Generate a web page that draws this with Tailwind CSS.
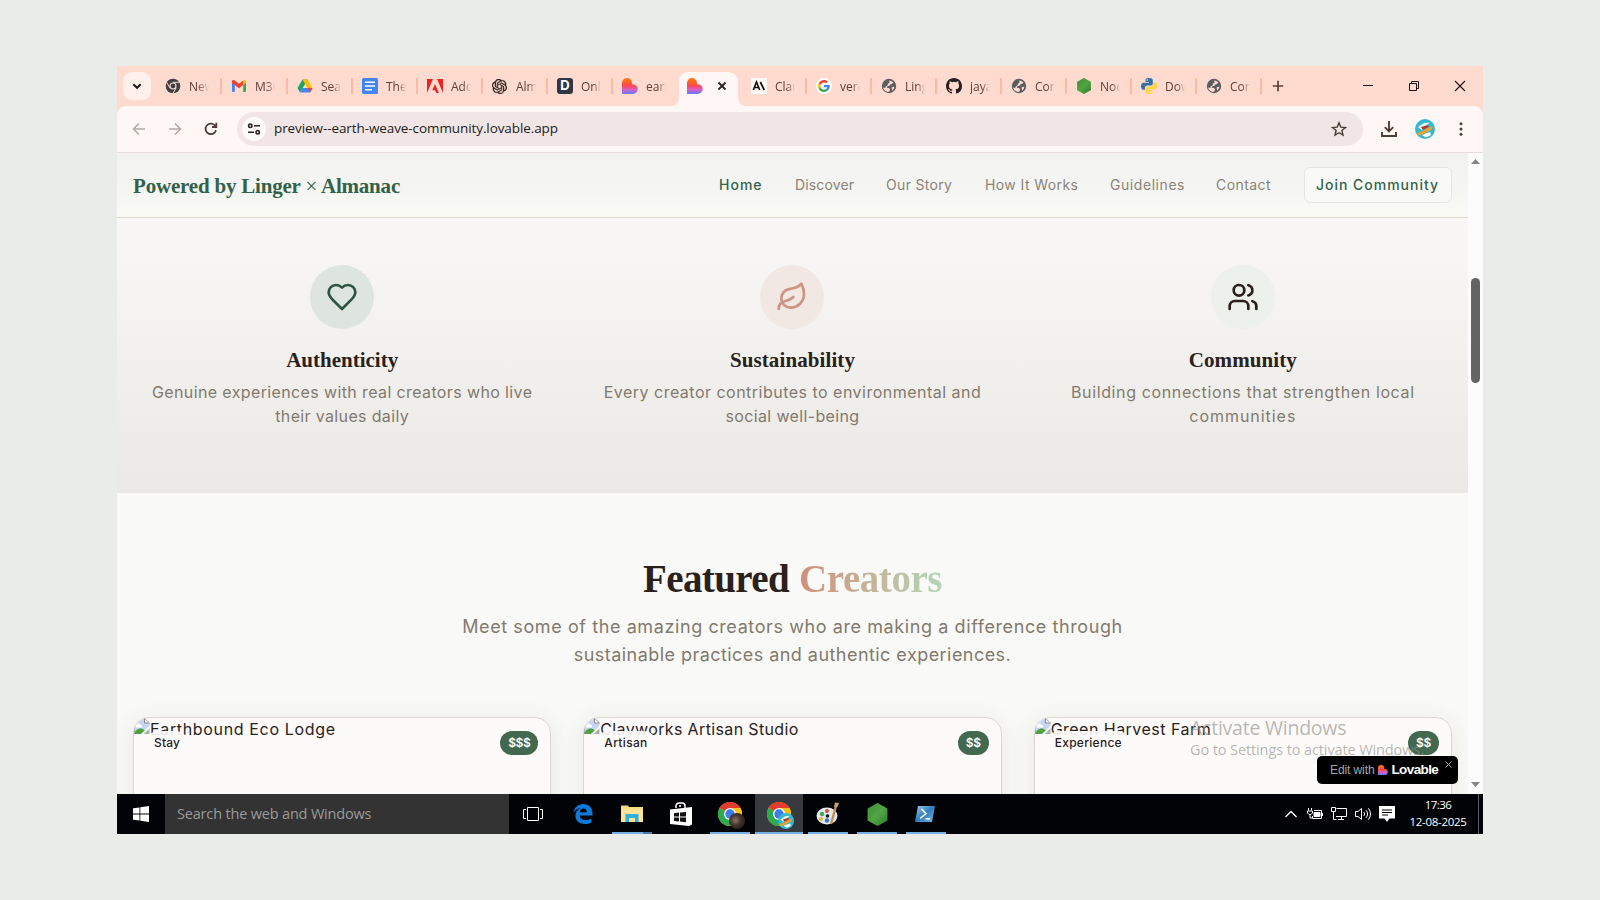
<!DOCTYPE html>
<html lang="en">
<head>
<meta charset="utf-8">
<title>Linger × Almanac</title>
<script src="https://cdn.jsdelivr.net/npm/@tailwindcss/browser@4"></script>
</head>
<body class="flex h-screen w-screen overflow-hidden bg-[#eaece9] pt-[66px] pl-[117px] font-['Inter',sans-serif]">

<svg class="absolute size-0">
  <defs>
    <linearGradient id="lv" x1="0" y1="0" x2="0" y2="1"><stop offset="0" stop-color="#ff7a1a"/><stop offset=".25" stop-color="#fd6420"/><stop offset=".5" stop-color="#fb4560"/><stop offset=".72" stop-color="#d85fc0"/><stop offset="1" stop-color="#5f7cff"/></linearGradient>
    <linearGradient id="nd" x1="0" y1="0" x2="1" y2="1"><stop offset="0" stop-color="#3c8f35"/><stop offset=".5" stop-color="#52a544"/><stop offset="1" stop-color="#2f7a2b"/></linearGradient>
    <linearGradient id="ps" x1="0" y1="0" x2="1" y2="1"><stop offset="0" stop-color="#9fd0ee"/><stop offset=".5" stop-color="#2f7dbb"/><stop offset="1" stop-color="#7fbbe2"/></linearGradient>
    <symbol id="lovable" viewBox="0 0 16 16"><path d="M0 5a5 5 0 0 1 10 0v1.2h.8a4.9 4.9 0 0 1 0 9.8H0z" fill="url(#lv)"/></symbol>
    <symbol id="globe" viewBox="0 0 16 16"><circle cx="8" cy="8" r="7.2" fill="#5a5d61"/><path d="M8.2 2.4c1.600.2 3.300.8 4.300 2.200l-1.600 1.300-1.900.5-.4 1.400-2 .3-.9 1.600 2.200.3 1.300 1.500-.9 1.900-1.500.6c-2.500-.4-4.300-2.100-4.800-4.400l2.200.3.5-1.500 2-1.200.2-1.700 1.600-.4z" fill="#ffdace"/><path d="M10.500 9.600l2.800-1c-.1 1.600-.8 3-2.100 3.900z" fill="#ffdace"/></symbol>
    <symbol id="chrome" viewBox="0 0 24 24"><circle cx="12" cy="12" r="12" fill="#fbc116"/><path d="M12 12L1.600 6A12 12 0 0 1 22.400 6z" fill="#e33b2e"/><path d="M1.600 6A12 12 0 0 0 12 24l5.200-9L12 12z" fill="#2da94f"/><path d="M22.400 6H12v6l5.200 3L12 24A12 12 0 0 0 22.400 6z" fill="#fbc116"/><circle cx="12" cy="12" r="6" fill="#fff"/><circle cx="12" cy="12" r="4.700" fill="#3b7cea"/></symbol>
    <symbol id="broken" viewBox="0 0 16 16"><path d="M0 0h10.500L15.500 5v5.500L9.500 16H0z" fill="#c6d5f3"/><path d="M10.500 0v5h5" fill="#fff" stroke="#8b8b8b"/><path d="M2 7.500a2.500 2.500 0 0 1 4.500-.8A2 2 0 0 1 8 9.500H2z" fill="#fff"/><path d="M0 16c1.500-4.500 5-6 8-5.500l3.500 2.300L8.500 16z" fill="#4fa23e"/><path d="M15.500 10.500V16H9.800z" fill="#a4b4a4"/><path d="M16 8.500L7.500 16.500" stroke="#fff" stroke-width="1.600"/><path d="M.5 0V16M0 .5h10.500L15.500 5" fill="none" stroke="#9a9a9a" stroke-width=".8"/></symbol>
    <symbol id="node" viewBox="0 0 20 22"><path d="M10 0l9.500 5.200v11.600L10 22 .5 16.800V5.200z" fill="url(#nd)"/></symbol>
    <symbol id="surfer" viewBox="0 0 20 20"><circle cx="10" cy="10" r="10" fill="#34b9d3"/><path d="M3 8l6-4 6-.5-3 2.500 2 2-7 3z" fill="#f5f1ea"/><path d="M6 8l7-2 1 2-6 3z" fill="#a33a35"/><path d="M2 14.500l14-7c2 0 2 2 0 3.500L6 16c-2 .8-4 0-4-1.500z" fill="#f0a02c"/><path d="M7 16l8-3 1 3-5 2.500z" fill="#fff"/></symbol>
  </defs>
</svg>

<div class="relative flex h-[768px] w-[1366px] flex-col overflow-hidden bg-[#ffdace]">

  <!-- Tab strip -->
  <div class="flex h-10 shrink-0 items-center pl-1.5 font-['Open_Sans',sans-serif] text-[12px] text-[#5d4039]">
    <div class="mr-[10px] flex size-7 items-center justify-center rounded-[9px] bg-[#fff0eb]"><svg class="size-3" viewBox="0 0 12 12" fill="none" stroke="#1f1a19" stroke-width="2"><path d="M2.300 4.300L6 7.800l3.700-3.500"/></svg></div>
    <div class="flex w-[66px] items-center pl-[4px]">
      <svg class="size-4 shrink-0" viewBox="0 0 16 16"><circle cx="8" cy="8" r="7.300" fill="#3f4045"/><circle cx="8" cy="8" r="3.500" fill="#ffdace"/><circle cx="8" cy="8" r="2.400" fill="#3f4045"/><path d="M8 4.300h6.600M4.800 9.800L1.500 4.200M11.200 9.800L7.900 15.400" stroke="#ffdace"/></svg>
      <span class="mt-0.5 ml-2 w-[20px] overflow-hidden whitespace-nowrap mask-r-from-40%">New</span><i class="ml-auto mr-[5px] h-4 w-0.5 bg-[#ffb9a2]"></i>
    </div>
    <div class="flex w-[66px] items-center pl-[4px]">
      <svg class="size-4 shrink-0" viewBox="0 0 16 16"><path d="M1 3.500h2.800V14H2a1 1 0 0 1-1-1z" fill="#4285f4"/><path d="M12.200 3.500H15V13a1 1 0 0 1-1 1h-1.800z" fill="#34a853"/><path d="M1 3.300C1 2 2.600 1.500 3.800 2.500L8 5.700l4.200-3.200V7L8 10.200 1 5z" fill="#ea4335"/><path d="M12.200 2.500C13.400 1.500 15 2 15 3.300V5l-2.800 2z" fill="#fbbc04"/></svg>
      <span class="mt-0.5 ml-2 w-[20px] overflow-hidden whitespace-nowrap mask-r-from-60%">M365</span><i class="ml-auto mr-[5px] h-4 w-0.5 bg-[#ffb9a2]"></i>
    </div>
    <div class="flex w-[65px] items-center pl-[4px]">
      <svg class="size-4 shrink-0" viewBox="0 0 16 16"><path d="M5.500 1.500h5L8 6 3 14.500.5 10z" fill="#1ea362"/><path d="M5.500 1.500h5l5 8.500h-5z" fill="#fbbc04"/><path d="M5.600 10h9.900L13 14.500H3z" fill="#4285f4"/><path d="M15.500 10L13 14.500 10.600 10z" fill="#ea4335"/></svg>
      <span class="mt-0.5 ml-2 w-[20px] overflow-hidden whitespace-nowrap mask-r-from-60%">Sea</span><i class="ml-auto mr-[5px] h-4 w-0.5 bg-[#ffb9a2]"></i>
    </div>
    <div class="flex w-[65px] items-center pl-[4px]">
      <svg class="size-4 shrink-0" viewBox="0 0 16 16"><rect width="16" height="16" rx="1.500" fill="#4285f4"/><path d="M3 4.300h10M3 8h10M3 11.700h7" stroke="#fff" stroke-width="1.600"/></svg>
      <span class="mt-0.5 ml-2 w-[20px] overflow-hidden whitespace-nowrap mask-r-from-60%">The</span><i class="ml-auto mr-[5px] h-4 w-0.5 bg-[#ffb9a2]"></i>
    </div>
    <div class="flex w-[65px] items-center pl-[4px]">
      <svg class="size-4 shrink-0" viewBox="0 0 16 16"><path d="M0 1h6L0 15zM10 1h6v14zM8 6l3.900 9H9.300l-1.200-2.800H5.300z" fill="#ed2224"/></svg>
      <span class="mt-0.5 ml-2 w-[20px] overflow-hidden whitespace-nowrap mask-r-from-60%">Ado</span><i class="ml-auto mr-[5px] h-4 w-0.5 bg-[#ffb9a2]"></i>
    </div>
    <div class="flex w-[65px] items-center pl-[4px]">
      <svg class="size-[15px] shrink-0" viewBox="0 0 24 24" fill="#2b2422" stroke="#2b2422" stroke-width=".5"><path d="M22.280 9.820a5.980 5.980 0 0 0-.52-4.910 6.050 6.050 0 0 0-6.510-2.900A6.070 6.070 0 0 0 4.980 4.180a5.980 5.980 0 0 0-4 2.900 6.050 6.050 0 0 0 .74 7.100 5.980 5.980 0 0 0 .51 4.910 6.050 6.050 0 0 0 6.510 2.900A5.980 5.980 0 0 0 13.260 24a6.060 6.060 0 0 0 5.770-4.210 5.990 5.990 0 0 0 4-2.900 6.060 6.060 0 0 0-.75-7.070zm-9.020 12.610a4.480 4.480 0 0 1-2.880-1.040l.14-.08 4.780-2.760a.8.8 0 0 0 .39-.68v-6.740l2.020 1.170a.07.07 0 0 1 .04.050v5.580a4.500 4.500 0 0 1-4.490 4.500zM3.600 18.300a4.470 4.470 0 0 1-.54-3.010l.14.080 4.780 2.760a.77.77 0 0 0 .78 0l5.840-3.370v2.330a.08.08 0 0 1-.03.060L9.740 19.950a4.500 4.500 0 0 1-6.140-1.650zM2.340 7.900a4.480 4.480 0 0 1 2.370-1.980v5.680a.77.77 0 0 0 .38.680l5.820 3.350-2.020 1.170a.08.08 0 0 1-.07 0l-4.830-2.790A4.500 4.500 0 0 1 2.340 7.870zm16.600 3.860L13.100 8.360l2.020-1.160a.08.08 0 0 1 .07 0l4.830 2.790a4.490 4.490 0 0 1-.68 8.100v-5.680a.79.79 0 0 0-.4-.650zm2.010-3.020l-.14-.09-4.780-2.780a.78.78 0 0 0-.78 0L9.410 9.230V6.900a.07.07 0 0 1 .03-.06l4.830-2.790a4.500 4.500 0 0 1 6.680 4.660zM8.310 12.860l-2.020-1.160a.08.08 0 0 1-.04-.06V6.070a4.500 4.500 0 0 1 7.370-3.450l-.14.080L8.700 5.460a.8.8 0 0 0-.39.680zm1.100-2.370l2.600-1.500 2.610 1.500v3l-2.600 1.500-2.610-1.500z"/></svg>
      <span class="mt-0.5 ml-[9px] w-[20px] overflow-hidden whitespace-nowrap mask-r-from-60%">Alm</span><i class="ml-auto mr-[5px] h-4 w-0.5 bg-[#ffb9a2]"></i>
    </div>
    <div class="flex w-[65px] items-center pl-[4px]">
      <div class="flex size-4 shrink-0 items-center justify-center rounded-[3px] bg-[#2f3744] font-['Inter'] text-[13px] font-bold text-white">D</div>
      <span class="mt-0.5 ml-2 w-[20px] overflow-hidden whitespace-nowrap mask-r-from-60%">Onl</span><i class="ml-auto mr-[5px] h-4 w-0.5 bg-[#ffb9a2]"></i>
    </div>
    <div class="flex w-[65px] items-center pl-[4px]">
      <svg class="size-4 shrink-0"><use href="#lovable"/></svg>
      <span class="mt-0.5 ml-2 w-[20px] overflow-hidden whitespace-nowrap mask-r-from-60%">earth</span>
    </div>
    <div class="relative -ml-1 flex h-[34px] w-[59px] items-center justify-between self-end rounded-t-[9px] bg-[#fff7f5] pr-2 pb-1.5 pl-2">
      <svg class="absolute bottom-0 -left-2 size-2" viewBox="0 0 8 8"><path d="M8 0v8H0a8 8 0 0 0 8-8z" fill="#fff7f5"/></svg>
      <svg class="absolute -right-2 bottom-0 size-2" viewBox="0 0 8 8"><path d="M0 0v8h8a8 8 0 0 1-8-8z" fill="#fff7f5"/></svg>
      <svg class="size-4"><use href="#lovable"/></svg>
      <svg class="size-4" viewBox="0 0 16 16" stroke="#2a2220" stroke-width="1.800"><path d="M4.500 4.500l7 7M11.500 4.500l-7 7"/></svg>
    </div>
    <div class="ml-[9px] flex w-[65px] items-center pl-[4px]">
      <div class="flex size-4 shrink-0 items-center justify-center bg-[#fffaf8]"><svg class="size-4" viewBox="0 0 16 16" fill="none" stroke="#111" stroke-width="1.700"><path d="M2.300 12L5.500 4l3.200 8M3.500 9.500h4M9.300 4l4 8"/></svg></div>
      <span class="mt-0.5 ml-2 w-[20px] overflow-hidden whitespace-nowrap mask-r-from-60%">Clau</span><i class="ml-auto mr-[5px] h-4 w-0.5 bg-[#ffb9a2]"></i>
    </div>
    <div class="flex w-[65px] items-center pl-[4px]">
      <div class="size-4 shrink-0 rounded-full bg-white p-[2px]"><svg class="size-3" viewBox="0 0 48 48"><path fill="#EA4335" d="M24 9.500c3.540 0 6.710 1.220 9.210 3.600l6.850-6.850C35.900 2.380 30.470 0 24 0 14.620 0 6.510 5.380 2.560 13.220l7.980 6.190C12.430 13.720 17.740 9.500 24 9.500z"/><path fill="#4285F4" d="M46.980 24.550c0-1.570-.15-3.090-.38-4.550H24v9.020h12.940c-.58 2.960-2.260 5.480-4.780 7.180l7.730 6c4.510-4.180 7.090-10.360 7.090-17.650z"/><path fill="#FBBC05" d="M10.530 28.590a14.500 14.500 0 0 1 0-9.180l-7.980-6.190a24 24 0 0 0 0 21.560z"/><path fill="#34A853" d="M24 48c6.480 0 11.930-2.130 15.890-5.810l-7.730-6c-2.150 1.450-4.920 2.300-8.160 2.300-6.260 0-11.570-4.220-13.470-9.910l-7.980 6.190C6.510 42.620 14.620 48 24 48z"/></svg></div>
      <span class="mt-0.5 ml-2 w-[20px] overflow-hidden whitespace-nowrap mask-r-from-60%">vero</span><i class="ml-auto mr-[5px] h-4 w-0.5 bg-[#ffb9a2]"></i>
    </div>
    <div class="flex w-[65px] items-center pl-[4px]">
      <svg class="size-4 shrink-0"><use href="#globe"/></svg>
      <span class="mt-0.5 ml-2 w-[20px] overflow-hidden whitespace-nowrap mask-r-from-60%">Ling</span><i class="ml-auto mr-[5px] h-4 w-0.5 bg-[#ffb9a2]"></i>
    </div>
    <div class="flex w-[65px] items-center pl-[4px]">
      <svg class="size-4 shrink-0" viewBox="0 0 16 16" fill="#24201f"><path d="M8 0C3.580 0 0 3.580 0 8c0 3.540 2.290 6.530 5.470 7.590.4.070.55-.17.55-.38 0-.19-.01-.82-.01-1.490-2.010.37-2.530-.49-2.690-.94-.09-.23-.48-.94-.82-1.130-.28-.15-.68-.52-.01-.53.63-.01 1.080.58 1.230.82.720 1.210 1.870.87 2.330.66.070-.52.280-.87.510-1.070-1.780-.2-3.640-.89-3.640-3.950 0-.87.310-1.590.82-2.150-.08-.2-.36-1.020.080-2.120 0 0 .67-.21 2.200.82a7.400 7.400 0 0 1 4 0c1.530-1.040 2.200-.82 2.200-.82.440 1.100.16 1.920.080 2.120.51.560.82 1.270.82 2.150 0 3.070-1.870 3.750-3.650 3.950.29.250.54.730.54 1.480 0 1.070-.01 1.930-.01 2.200 0 .21.150.46.550.38A8.010 8.010 0 0 0 16 8c0-4.420-3.580-8-8-8z"/></svg>
      <span class="mt-0.5 ml-2 w-[20px] overflow-hidden whitespace-nowrap mask-r-from-60%">jaya</span><i class="ml-auto mr-[5px] h-4 w-0.5 bg-[#ffb9a2]"></i>
    </div>
    <div class="flex w-[65px] items-center pl-[4px]">
      <svg class="size-4 shrink-0"><use href="#globe"/></svg>
      <span class="mt-0.5 ml-2 w-[20px] overflow-hidden whitespace-nowrap mask-r-from-60%">Con</span><i class="ml-auto mr-[5px] h-4 w-0.5 bg-[#ffb9a2]"></i>
    </div>
    <div class="flex w-[65px] items-center pl-[4px]">
      <svg class="size-4 shrink-0"><use href="#node"/></svg>
      <span class="mt-0.5 ml-2 w-[20px] overflow-hidden whitespace-nowrap mask-r-from-60%">Nod</span><i class="ml-auto mr-[5px] h-4 w-0.5 bg-[#ffb9a2]"></i>
    </div>
    <div class="flex w-[65px] items-center pl-[4px]">
      <svg class="size-4 shrink-0" viewBox="0 0 16 16"><path d="M7.900 0C4.800 0 4.500 1.300 4.500 2.200V4H8v.7H2.500C1 4.700 0 6 0 8.200s1 3.500 2.300 3.500h1.600V9.900c0-1.300 1-2.400 2.300-2.400h3.600c1.100 0 2-.9 2-2V2.200C11.800.8 10.400 0 7.900 0z" fill="#3571a3"/><path d="M8.100 16c3.100 0 3.400-1.300 3.400-2.200V12H8v-.7h5.500c1.500 0 2.500-1.300 2.500-3.500s-1-3.500-2.300-3.500h-1.300v1.800c0 1.300-1 2.400-2.300 2.400H6.500c-1.100 0-2 .9-2 2v3.300C4.500 15.200 5.600 16 8.100 16z" fill="#ffd343"/><circle cx="6.200" cy="2" r=".7" fill="#fff"/><circle cx="9.800" cy="14" r=".7" fill="#fff"/></svg>
      <span class="mt-0.5 ml-2 w-[20px] overflow-hidden whitespace-nowrap mask-r-from-60%">Dow</span><i class="ml-auto mr-[5px] h-4 w-0.5 bg-[#ffb9a2]"></i>
    </div>
    <div class="flex w-[65px] items-center pl-[4px]">
      <svg class="size-4 shrink-0"><use href="#globe"/></svg>
      <span class="mt-0.5 ml-2 w-[20px] overflow-hidden whitespace-nowrap mask-r-from-60%">Con</span><i class="ml-auto mr-[5px] h-4 w-0.5 bg-[#ffb9a2]"></i>
    </div>
    <svg class="ml-[5px] size-3 shrink-0" viewBox="0 0 12 12" stroke="#5d4039" stroke-width="1.700"><path d="M6 .8v10.400M.8 6h10.400"/></svg>
    <div class="mr-[17px] ml-auto flex gap-[34px]">
      <svg class="size-3" viewBox="0 0 12 12" stroke="#1a1514"><path d="M1 5.500h10"/></svg>
      <svg class="size-3" viewBox="0 0 12 12" fill="none" stroke="#1a1514"><path d="M1.500 3.500h7v7h-7zM3.500 3.500v-2h7v7h-2"/></svg>
      <svg class="size-3" viewBox="0 0 12 12" stroke="#1a1514" stroke-width="1.100"><path d="M1 1l10 10M11 1L1 11"/></svg>
    </div>
  </div>

  <!-- Toolbar -->
  <div class="flex h-[47px] shrink-0 items-center rounded-t-[9px] border-b border-[#e6dedb] bg-[#fff7f5] pl-[14px]">
    <svg class="size-4" viewBox="0 0 16 16" fill="none" stroke="#b5a9a6" stroke-width="1.600"><path d="M14 8H2.500M8 2.500L2.500 8 8 13.500"/></svg>
    <svg class="ml-5 size-4" viewBox="0 0 16 16" fill="none" stroke="#b5a9a6" stroke-width="1.600"><path d="M2 8h11.500M8 2.500L13.500 8 8 13.500"/></svg>
    <svg class="ml-5 size-4" viewBox="0 0 16 16" fill="none" stroke="#4e3f3b" stroke-width="1.800"><path d="M13 9.200A5.300 5.300 0 1 1 11.700 4.200L13 5.500"/><path d="M13.300 1.800v4.200H9"/></svg>
    <div class="ml-[18px] flex h-[34px] w-[1126px] items-center rounded-full bg-[#f1e6e5] pr-4 pl-[5px]">
      <div class="flex size-6 items-center justify-center rounded-full bg-[#fffafa]"><svg class="size-[14px]" viewBox="0 0 14 14" fill="none" stroke="#2c2321" stroke-width="1.600"><circle cx="3.300" cy="3.800" r="1.700"/><path d="M7 3.800h6M1 10.200h6"/><circle cx="10.700" cy="10.200" r="1.700"/></svg></div>
      <span class="mb-px ml-2 font-['Open_Sans',sans-serif] text-[13.5px] tracking-[-0.091px] text-[#231d1c]">preview--earth-weave-community.lovable.app</span>
      <svg class="ml-auto size-4" viewBox="0 0 16 16" fill="none" stroke="#4b3c38" stroke-width="1.400"><path d="M8 1.800l1.800 4.300 4.700.4-3.600 3 1.100 4.600L8 11.700l-4 2.400 1.100-4.600-3.600-3 4.700-.4z"/></svg>
    </div>
    <svg class="ml-[18px] size-4" viewBox="0 0 16 16" fill="none" stroke="#4e3b36" stroke-width="1.900"><path d="M8 0v10M3.800 6.200L8 10.400l4.200-4.200M1 11v4h14v-4"/></svg>
    <svg class="ml-[18px] size-5"><use href="#surfer"/></svg>
    <svg class="ml-[18px] size-4" viewBox="0 0 16 16" fill="#4e3f3b"><circle cx="8" cy="2.800" r="1.500"/><circle cx="8" cy="8" r="1.500"/><circle cx="8" cy="13.200" r="1.500"/></svg>
  </div>

  <!-- Page and scrollbar -->
  <div class="flex h-[641px] shrink-0">
    <div class="flex h-full w-[1351px] flex-col overflow-hidden bg-[#f9f9f7]">
      <header class="flex h-[65px] shrink-0 items-center border-b border-[#dcd9cf] bg-linear-to-b from-[#f2f3f1] via-[#f5f6f3] via-60% to-[#fafaf5] px-4">
        <div class="pt-[3px] font-['Liberation_Serif',serif] text-[21px] font-bold tracking-[-0.2px] whitespace-nowrap text-[#33614a]">Powered by Linger <span class="font-normal">×</span> Almanac</div>
        <nav class="ml-auto flex items-center text-[14px] whitespace-nowrap text-[#8b8378]">
          <a class="mr-[31px] w-[44px] pb-0.5 font-medium tracking-[1px] text-[#33614a]">Home</a>
          <a class="mr-[31px] w-[61px] pb-0.5 pl-px tracking-[0.138px]">Discover</a>
          <a class="mr-[31px] w-[68px] pb-0.5 tracking-[0.328px]">Our Story</a>
          <a class="mr-[31px] w-[94px] pb-0.5 tracking-[0.412px]">How It Works</a>
          <a class="mr-[31px] w-[75px] pb-0.5 tracking-[0.561px]">Guidelines</a>
          <a class="mr-[31px] w-[57px] pb-0.5 tracking-[0.419px]">Contact</a>
          <a class="flex h-9 w-[148px] items-center rounded-md border border-[#e6e6e0] bg-[#f9faf8] pb-0.5 pl-[11px] font-medium tracking-[0.98px] text-[#33614a]">Join Community</a>
        </nav>
      </header>

      <section class="grid h-[275px] shrink-0 grid-cols-3 gap-8 bg-linear-to-b from-[#f9f8f6] to-[#ebe9e6] px-4 pt-[47px] text-center">
        <div class="flex flex-col items-center">
          <div class="mb-[17px] flex size-16 items-center justify-center rounded-full bg-[#dee4de]"><svg class="size-8" viewBox="0 0 24 24" fill="none" stroke="#2b5541" stroke-width="2" stroke-linecap="round" stroke-linejoin="round"><path d="M19 14c1.490-1.460 3-3.210 3-5.500A5.500 5.500 0 0 0 16.500 3c-1.760 0-3 .5-4.500 2-1.500-1.500-2.740-2-4.500-2A5.500 5.500 0 0 0 2 8.500c0 2.300 1.500 4.050 3 5.500l7 7Z"/></svg></div>
          <h3 class="mb-1.5 font-['Liberation_Serif',serif] text-[21px] leading-7 font-bold text-[#2a211d]">Authenticity</h3>
          <p class="text-base whitespace-nowrap text-[#827a6d]"><span class="block tracking-[0.376px]">Genuine experiences with real creators who live</span><span class="block tracking-[0.351px]">their values daily</span></p>
        </div>
        <div class="flex flex-col items-center">
          <div class="mb-[17px] flex size-16 items-center justify-center rounded-full bg-[#f1e8e4]"><svg class="size-8" viewBox="0 0 24 24" fill="none" stroke="#ce9382" stroke-width="2" stroke-linecap="round" stroke-linejoin="round"><path d="M11 20A7 7 0 0 1 9.800 6.100C15.500 5 17 4.480 19 2c1 2 2 4.180 2 8 0 5.500-4.780 10-10 10Z"/><path d="M2 21c0-3 1.850-5.360 5.080-6C9.500 14.520 12 13 13 12"/></svg></div>
          <h3 class="mb-1.5 font-['Liberation_Serif',serif] text-[21px] leading-7 font-bold tracking-[0.1px] text-[#2a211d]">Sustainability</h3>
          <p class="text-base whitespace-nowrap text-[#827a6d]"><span class="block tracking-[0.484px]">Every creator contributes to environmental and</span><span class="block tracking-[0.349px]">social well-being</span></p>
        </div>
        <div class="flex flex-col items-center">
          <div class="mb-[17px] flex size-16 items-center justify-center rounded-full bg-[#edf0eb]"><svg class="size-8" viewBox="0 0 24 24" fill="none" stroke="#2a211d" stroke-width="2" stroke-linecap="round" stroke-linejoin="round"><path d="M16 21v-2a4 4 0 0 0-4-4H6a4 4 0 0 0-4 4v2"/><circle cx="9" cy="7" r="4"/><path d="M22 21v-2a4 4 0 0 0-3-3.870M16 3.130a4 4 0 0 1 0 7.750"/></svg></div>
          <h3 class="mb-1.5 font-['Liberation_Serif',serif] text-[21px] leading-7 font-bold tracking-[0.1px] text-[#2a211d]">Community</h3>
          <p class="text-base whitespace-nowrap text-[#827a6d]"><span class="block tracking-[0.625px]">Building connections that strengthen local</span><span class="block tracking-[0.956px]">communities</span></p>
        </div>
      </section>

      <section class="shrink-0 pt-[66px] text-center">
        <h2 class="mb-[14px] flex justify-center font-['Liberation_Serif',serif] text-[39px] leading-10 font-bold text-[#2a211d]"><span class="mr-[10px] tracking-[-0.6px]">Featured</span><span class="bg-linear-to-r from-[#cf8f7c] to-[#b2d6b6] bg-clip-text tracking-[-0.45px] text-transparent">Creators</span></h2>
        <p class="mb-12 text-lg leading-7 whitespace-nowrap text-[#827a6d]"><span class="block tracking-[0.592px]">Meet some of the amazing creators who are making a difference through</span><span class="block tracking-[0.45px]">sustainable practices and authentic experiences.</span></p>
        <div class="grid grid-cols-3 gap-8 px-4 text-left text-[#2a211d]">
          <article class="relative h-[300px] overflow-hidden rounded-2xl border border-[#dcd8d0] bg-[#fcfbf9] shadow-[0_4px_24px_rgba(60,50,30,0.09)]">
            <div class="flex h-6 items-start whitespace-nowrap"><svg class="size-4 shrink-0"><use href="#broken"/></svg><span class="-mt-px tracking-[0.652px]">Earthbound Eco Lodge</span></div>
            <span class="absolute top-[13px] left-3 flex h-6 items-center rounded-full bg-[#fcfbf9]/90 px-2 text-xs font-medium tracking-[0.188px]">Stay</span>
            <span class="absolute top-[13px] right-3 flex h-6 w-[38px] items-center justify-center rounded-full bg-[#42694f] text-xs font-semibold tracking-[-0.4px] text-white">$$$</span>
          </article>
          <article class="relative h-[300px] overflow-hidden rounded-2xl border border-[#dcd8d0] bg-[#fcfbf9] shadow-[0_4px_24px_rgba(60,50,30,0.09)]">
            <div class="flex h-6 items-start whitespace-nowrap"><svg class="size-4 shrink-0"><use href="#broken"/></svg><span class="-mt-px tracking-[0.359px]">Clayworks Artisan Studio</span></div>
            <span class="absolute top-[13px] left-3 flex h-6 items-center rounded-full bg-[#fcfbf9]/90 px-2 text-xs font-medium tracking-[0.339px]">Artisan</span>
            <span class="absolute top-[13px] right-3 flex h-6 w-[31px] items-center justify-center rounded-full bg-[#42694f] text-xs font-semibold tracking-[-0.4px] text-white">$$</span>
          </article>
          <article class="relative h-[300px] overflow-hidden rounded-2xl border border-[#dcd8d0] bg-[#fcfbf9] shadow-[0_4px_24px_rgba(60,50,30,0.09)]">
            <div class="flex h-6 items-start whitespace-nowrap"><svg class="size-4 shrink-0"><use href="#broken"/></svg><span class="-mt-px tracking-[0.472px]">Green Harvest Farm</span></div>
            <span class="absolute top-[13px] left-3 flex h-6 items-center rounded-full bg-[#fcfbf9]/90 px-2 text-xs font-medium tracking-[0.283px]">Experience</span>
            <span class="absolute top-[13px] right-3 flex h-6 w-[31px] items-center justify-center rounded-full bg-[#42694f] text-xs font-semibold tracking-[-0.4px] text-white">$$</span>
          </article>
        </div>
      </section>
    </div>
    <div class="flex w-[15px] flex-col items-center bg-[#fcfcfc] pt-1.5">
      <svg class="h-[5px] w-[9px]" viewBox="0 0 9 5" fill="#858585"><path d="M0 5L4.500 0 9 5z"/></svg>
      <div class="mt-[114px] h-[105px] w-[9px] rounded-full bg-[#636363]"></div>
      <svg class="mt-auto mb-[7px] h-[5px] w-[9px]" viewBox="0 0 9 5" fill="#858585"><path d="M0 0L4.500 5 9 0z"/></svg>
    </div>
  </div>

  <!-- Taskbar -->
  <div class="flex h-10 shrink-0 bg-[#020306] font-['Open_Sans',sans-serif]">
    <div class="flex w-12 items-center justify-center"><svg class="size-4" viewBox="0 0 16 16" fill="#fff"><path d="M0 2.300L6.500 1.400v6.200H0zM7.300 1.300L16 0v7.600H7.300zM0 8.400h6.500v6.200L0 13.700zM7.300 8.400H16V16l-8.700-1.300z"/></svg></div>
    <div class="flex w-[344px] items-center bg-[#333333] pl-3 text-[14.5px] tracking-[-0.177px] whitespace-nowrap text-[#9a9a9a]">Search the web and Windows</div>
    <div class="flex w-12 items-center justify-center"><svg class="h-[14px] w-5" viewBox="0 0 20 14" fill="none" stroke="#fff"><path d="M4.500.5h11v13h-11zM3 2.500H.5v9H3M17 2.500h2.500v9H17"/></svg></div>
    <div class="flex w-[51px] items-center justify-center"><svg class="size-5" viewBox="0 0 20 21"><path d="M0 9.300C.8 3.800 4.800 0 10.400 0 16 0 20 4 20 9.800V12H6.600c.2 3 2.700 4.800 6.200 4.800 2.200 0 4.200-.6 6-1.600v4.400c-2 1-4.300 1.400-6.800 1.400C5.800 21 2 17.500 2 12.400 2 8.800 4.200 5.800 7.700 4.300 4.300 4.700 1.500 6.500 0 9.300zm6.700-.7H14c0-2.400-1.200-3.900-3.500-3.900-2.200 0-3.600 1.600-3.800 3.900z" fill="#0e7ad8"/></svg></div>
    <div class="relative flex w-12 items-center justify-center"><svg class="h-5 w-[22px]" viewBox="0 0 22 20"><path d="M0 1.500h7l1 1.500h14v15H0z" fill="#f8d977"/><path d="M0 4.500h22V18H0z" fill="#fbe295"/><path d="M4.500 10h13v8h-3.500v-4H8v4H4.500z" fill="#2fb0dd"/></svg><i class="absolute bottom-0 left-1 h-0.5 w-[31px] bg-[#76b0e5]"></i><i class="absolute bottom-0 left-[35px] h-0.5 w-[9px] bg-[#4f7ba4]"></i></div>
    <div class="flex w-[50px] items-center justify-center"><svg class="h-6 w-[22px]" viewBox="0 0 22 24"><path d="M6 6V4a3 3 0 0 1 3-3h3a3 3 0 0 1 3 3v2M10 5V3" fill="none" stroke="#fff" stroke-width="1.500"/><path d="M0 7.500L22 5v17.500l-3 1.500L0 22z" fill="#fff"/><path d="M4 11.200l5-.6v4H4zM10 10.500l6-.6v4.700h-6zM4 15.500h5v4l-5-.5zM10 15.500h6v4.700l-6-.6z" fill="#111"/></svg></div>
    <div class="relative flex w-12 items-center justify-center"><svg class="size-6"><use href="#chrome"/></svg><i class="absolute top-[19px] left-[23px] size-4 rounded-full bg-[radial-gradient(circle_at_40%_45%,#8a7461_0,#3a3029_45%,#1c1713_100%)]"></i><i class="absolute bottom-0 left-1 h-0.5 w-10 bg-[#76b0e5]"></i></div>
    <div class="relative ml-px flex w-12 items-center justify-center border-b-2 border-[#76b0e5] bg-[#373a3f] pt-0.5"><svg class="size-6"><use href="#chrome"/></svg><svg class="absolute top-[19px] left-[23px] size-4"><use href="#surfer"/></svg></div>
    <div class="relative flex w-[50px] items-center justify-center"><svg class="size-6" viewBox="0 0 24 24"><ellipse cx="11" cy="14" rx="10.500" ry="8.500" fill="#dfeaf3"/><circle cx="6" cy="12" r="2.200" fill="#4aa84a"/><circle cx="11" cy="9" r="2" fill="#dc4a3b"/><circle cx="5" cy="17" r="2" fill="#e8b63c"/><circle cx="11" cy="18.500" r="2.200" fill="#3b78c9"/><circle cx="11.500" cy="14" r="1.800" fill="#16181c"/><path d="M20 4L15 22" stroke="#c98a4c" stroke-width="2.400"/><path d="M18 5l1-4.500 4 .5-1.500 4z" fill="#c7a17c"/></svg><i class="absolute bottom-0 left-[5px] h-0.5 w-10 bg-[#76b0e5]"></i></div>
    <div class="relative flex w-12 items-center justify-center"><svg class="h-[23px] w-[21px]"><use href="#node"/></svg><i class="absolute bottom-0 left-1 h-0.5 w-10 bg-[#76b0e5]"></i></div>
    <div class="relative flex w-12 items-center justify-center"><svg class="h-4 w-5" viewBox="0 0 20 16"><path d="M3 0h17l-3 16H0z" fill="url(#ps)"/><path d="M6.500 3l4.500 4.700L5 12.500M10.500 12.700h4.500" fill="none" stroke="#fff" stroke-width="1.600"/></svg><i class="absolute bottom-0 left-[5px] h-0.5 w-10 bg-[#76b0e5]"></i></div>
    <div class="ml-auto flex items-center">
      <svg class="h-2 w-3" viewBox="0 0 12 8" fill="none" stroke="#fff" stroke-width="1.300"><path d="M.5 7L6 1.500 11.500 7"/></svg>
      <svg class="ml-[10px] h-3 w-4" viewBox="0 0 16 12" fill="none" stroke="#fff"><path d="M1.500 0v2.500M4.500 0v2.500M.5 3h5v2L4 6.500H2L.5 5zM3 6.500V10h2M7 2.500h7.500v8H5.500V8M15.500 5v3"/><path d="M7 4.500h6v4H7z" fill="#fff"/></svg>
      <svg class="ml-2 h-[14px] w-4" viewBox="0 0 16 14" fill="none" stroke="#fff"><path d="M5.500 1.500h10v8H5M.5.500h4v4h-4zM2.500 4.500v8h3M10.500 9.500v3M7 12.500h6"/></svg>
      <svg class="ml-2 h-[14px] w-4" viewBox="0 0 16 14" fill="none" stroke="#fff"><path d="M.5 4.500h2.500l3.500-3v11l-3.500-3H.5zM8.800 5a3 3 0 0 1 0 4M11 3.200a5.500 5.500 0 0 1 0 7.600M13.200 1.200a8.500 8.500 0 0 1 0 11.600"/></svg>
      <svg class="ml-2 size-4" viewBox="0 0 16 16"><path d="M0 0h16v12.500h-5.500L8 16l-2.500-3.500H0z" fill="#fff"/><path d="M3 4h10M3 6.500h10M3 9h6" stroke="#020306" stroke-width="1.200"/></svg>
      <div class="ml-[13px] flex w-[60px] flex-col items-center pb-0.5 text-[11.5px] leading-[17px] whitespace-nowrap text-white"><span class="tracking-[-0.6px]">17:36</span><span class="tracking-[-0.3px]">12-08-2025</span></div>
      <i class="mr-1 ml-[10px] h-10 w-px bg-[#5b5d60]"></i>
    </div>
  </div>

  <!-- Activation watermark -->
  <div class="absolute top-[648px] left-[1073px] font-['Open_Sans',sans-serif] whitespace-nowrap text-[#8f8f8c]/65">
    <div class="text-[19.5px] leading-7 tracking-[-0.235px]">Activate Windows</div>
    <div class="-mt-0.5 text-[14.5px] leading-5 tracking-[-0.106px]">Go to Settings to activate Windows.</div>
  </div>

  <!-- Edit badge -->
  <div class="absolute top-[690px] left-[1200px] flex h-7 w-[141px] items-center rounded-[5px] bg-black pl-[13px] font-['Liberation_Sans',sans-serif] whitespace-nowrap">
    <span class="text-[12px] tracking-[-0.1px] text-[#a6a6a6]">Edit with</span>
    <svg class="ml-1 size-[10px]"><use href="#lovable"/></svg>
    <span class="ml-[3px] text-[13.5px] font-bold tracking-[-0.6px] text-white">Lovable</span>
    <svg class="absolute top-[5px] right-[6px] size-[7px]" viewBox="0 0 7 7" stroke="#b0b0b0"><path d="M.5.500l6 6M6.500.5l-6 6"/></svg>
  </div>
</div>
</body>
</html>
